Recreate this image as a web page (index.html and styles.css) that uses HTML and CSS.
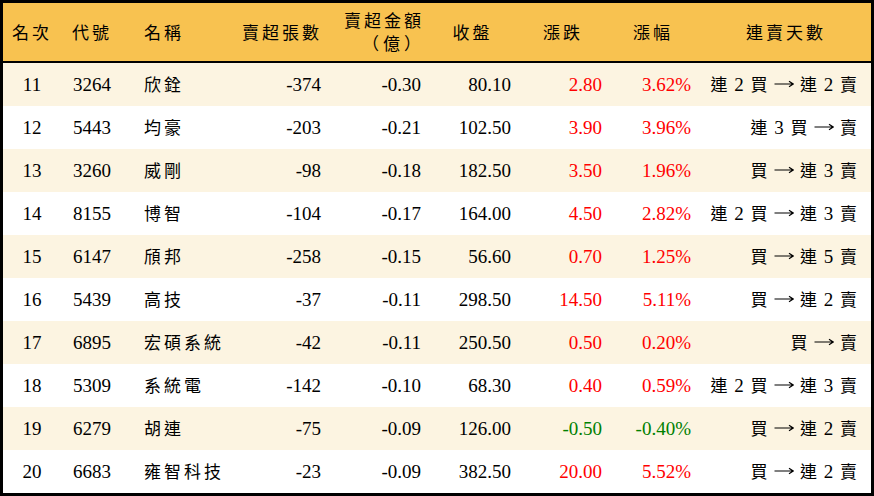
FILE: index.html
```html
<!DOCTYPE html>
<html lang="zh-Hant">
<head>
<meta charset="utf-8">
<title>賣超排行</title>
<link rel="stylesheet" href="styles.css">
</head>
<body>
<div class="frame">
<table class="board">
<colgroup>
<col class="w1"><col class="w2"><col class="w3"><col class="w4"><col class="w5"><col class="w6"><col class="w7"><col class="w8"><col class="w9">
</colgroup>
<thead>
<tr>
<th class="ctr"><span class="c">名次</span></th>
<th class="ctr"><span class="c">代號</span></th>
<th class="lft"><span class="c">名稱</span></th>
<th class="rgt"><span class="c">賣超張數</span></th>
<th class="rgt"><div class="line"><span class="c">賣超金額</span></div><div class="line"><span class="c unit">（億）</span></div></th>
<th class="rgt"><span class="c">收盤</span></th>
<th class="rgt"><span class="c">漲跌</span></th>
<th class="rgt"><span class="c">漲幅</span></th>
<th class="ctr"><span class="c">連賣天數</span></th>
</tr>
</thead>
<tbody>
<tr class="alt"><td class="ctr">11</td><td class="ctr">3264</td><td class="lft"><span class="c">欣銓</span></td><td class="rgt">-374</td><td class="rgt">-0.30</td><td class="rgt">80.10</td><td class="rgt up">2.80</td><td class="rgt up">3.62%</td><td class="days"><span class="c">連</span> 2 <span class="c">買</span> <svg class="arr" viewBox="0 0 20 10"><path d="M0.5 5H19M15 2.2L19.3 5L15 7.8"/></svg> <span class="c">連</span> 2 <span class="c">賣</span></td></tr>
<tr><td class="ctr">12</td><td class="ctr">5443</td><td class="lft"><span class="c">均豪</span></td><td class="rgt">-203</td><td class="rgt">-0.21</td><td class="rgt">102.50</td><td class="rgt up">3.90</td><td class="rgt up">3.96%</td><td class="days"><span class="c">連</span> 3 <span class="c">買</span> <svg class="arr" viewBox="0 0 20 10"><path d="M0.5 5H19M15 2.2L19.3 5L15 7.8"/></svg> <span class="c">賣</span></td></tr>
<tr class="alt"><td class="ctr">13</td><td class="ctr">3260</td><td class="lft"><span class="c">威剛</span></td><td class="rgt">-98</td><td class="rgt">-0.18</td><td class="rgt">182.50</td><td class="rgt up">3.50</td><td class="rgt up">1.96%</td><td class="days"><span class="c">買</span> <svg class="arr" viewBox="0 0 20 10"><path d="M0.5 5H19M15 2.2L19.3 5L15 7.8"/></svg> <span class="c">連</span> 3 <span class="c">賣</span></td></tr>
<tr><td class="ctr">14</td><td class="ctr">8155</td><td class="lft"><span class="c">博智</span></td><td class="rgt">-104</td><td class="rgt">-0.17</td><td class="rgt">164.00</td><td class="rgt up">4.50</td><td class="rgt up">2.82%</td><td class="days"><span class="c">連</span> 2 <span class="c">買</span> <svg class="arr" viewBox="0 0 20 10"><path d="M0.5 5H19M15 2.2L19.3 5L15 7.8"/></svg> <span class="c">連</span> 3 <span class="c">賣</span></td></tr>
<tr class="alt"><td class="ctr">15</td><td class="ctr">6147</td><td class="lft"><span class="c">頎邦</span></td><td class="rgt">-258</td><td class="rgt">-0.15</td><td class="rgt">56.60</td><td class="rgt up">0.70</td><td class="rgt up">1.25%</td><td class="days"><span class="c">買</span> <svg class="arr" viewBox="0 0 20 10"><path d="M0.5 5H19M15 2.2L19.3 5L15 7.8"/></svg> <span class="c">連</span> 5 <span class="c">賣</span></td></tr>
<tr><td class="ctr">16</td><td class="ctr">5439</td><td class="lft"><span class="c">高技</span></td><td class="rgt">-37</td><td class="rgt">-0.11</td><td class="rgt">298.50</td><td class="rgt up">14.50</td><td class="rgt up">5.11%</td><td class="days"><span class="c">買</span> <svg class="arr" viewBox="0 0 20 10"><path d="M0.5 5H19M15 2.2L19.3 5L15 7.8"/></svg> <span class="c">連</span> 2 <span class="c">賣</span></td></tr>
<tr class="alt"><td class="ctr">17</td><td class="ctr">6895</td><td class="lft"><span class="c">宏碩系統</span></td><td class="rgt">-42</td><td class="rgt">-0.11</td><td class="rgt">250.50</td><td class="rgt up">0.50</td><td class="rgt up">0.20%</td><td class="days"><span class="c">買</span> <svg class="arr" viewBox="0 0 20 10"><path d="M0.5 5H19M15 2.2L19.3 5L15 7.8"/></svg> <span class="c">賣</span></td></tr>
<tr><td class="ctr">18</td><td class="ctr">5309</td><td class="lft"><span class="c">系統電</span></td><td class="rgt">-142</td><td class="rgt">-0.10</td><td class="rgt">68.30</td><td class="rgt up">0.40</td><td class="rgt up">0.59%</td><td class="days"><span class="c">連</span> 2 <span class="c">買</span> <svg class="arr" viewBox="0 0 20 10"><path d="M0.5 5H19M15 2.2L19.3 5L15 7.8"/></svg> <span class="c">連</span> 3 <span class="c">賣</span></td></tr>
<tr class="alt"><td class="ctr">19</td><td class="ctr">6279</td><td class="lft"><span class="c">胡連</span></td><td class="rgt">-75</td><td class="rgt">-0.09</td><td class="rgt">126.00</td><td class="rgt down">-0.50</td><td class="rgt down">-0.40%</td><td class="days"><span class="c">買</span> <svg class="arr" viewBox="0 0 20 10"><path d="M0.5 5H19M15 2.2L19.3 5L15 7.8"/></svg> <span class="c">連</span> 2 <span class="c">賣</span></td></tr>
<tr><td class="ctr">20</td><td class="ctr">6683</td><td class="lft"><span class="c">雍智科技</span></td><td class="rgt">-23</td><td class="rgt">-0.09</td><td class="rgt">382.50</td><td class="rgt up">20.00</td><td class="rgt up">5.52%</td><td class="days"><span class="c">買</span> <svg class="arr" viewBox="0 0 20 10"><path d="M0.5 5H19M15 2.2L19.3 5L15 7.8"/></svg> <span class="c">連</span> 2 <span class="c">賣</span></td></tr>
</tbody>
</table>
</div>
</body>
</html>
```
FILE: styles.css
```css
html, body {
  margin: 0;
  padding: 0;
  background: #ffffff;
}

.frame {
  width: 874px;
  height: 496px;
  box-sizing: border-box;
  border: 3px solid #000000;
  background: #ffffff;
}

.board {
  width: 100%;
  border-collapse: separate;
  border-spacing: 0;
  table-layout: fixed;
  font-family: "Liberation Serif", "Noto Sans CJK TC", serif;
  font-size: 19px;
  color: #000000;
}

.w1 { width: 58px; }
.w2 { width: 62px; }
.w3 { width: 117px; }
.w4 { width: 91px; }
.w5 { width: 100px; }
.w6 { width: 90px; }
.w7 { width: 91px; }
.w8 { width: 89px; }
.w9 { width: 170px; }

.c {
  font-family: "Noto Sans CJK TC", sans-serif;
  font-size: 17px;
  letter-spacing: 3px;
}

thead tr {
  height: 60px;
}

thead th {
  background: #f8c250;
  border-bottom: 2px solid #000000;
  font-weight: normal;
  padding: 0;
  line-height: 22px;
  vertical-align: middle;
}

thead th.rgt {
  padding-right: 7px;
}

thead th.lft {
  padding-left: 21px;
}

.line {
  text-align: right;
  white-space: nowrap;
}

.unit {
  letter-spacing: 4px;
  margin-right: -1px;
}

tbody tr {
  height: 43px;
}

tbody tr.alt {
  background: #fcf4e1;
}

tbody td {
  padding: 0;
  vertical-align: middle;
  white-space: nowrap;
  line-height: 22px;
}

.ctr { text-align: center; }
.lft { text-align: left; padding-left: 21px; }
tbody td.rgt { text-align: right; padding-right: 10px; }

.up { color: #ff0000; }
.down { color: #008000; }

.days {
  text-align: right;
  padding-right: 13px;
  letter-spacing: 1px;
}

.days .c {
  letter-spacing: 1px;
}

.arr {
  width: 20px;
  height: 10px;
  vertical-align: 2px;
  fill: none;
  stroke: #000000;
  stroke-width: 1.2;
}
```
